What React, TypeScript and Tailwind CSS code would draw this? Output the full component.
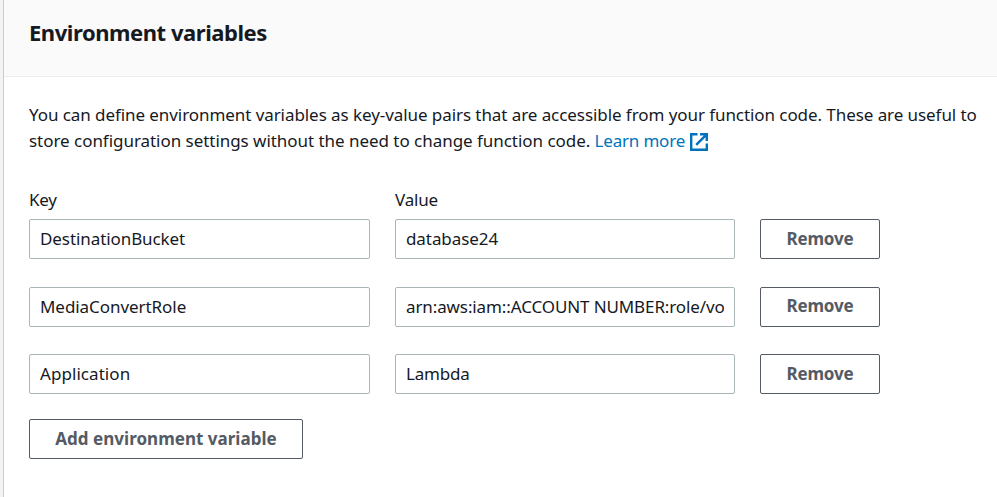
import type { ReactNode } from 'react';

type Variable = { name: string; value: string; keyTracking: string; valueTracking: string; gap: string; labelShift: string };

const variables: Variable[] = [
  { name: 'DestinationBucket', value: 'database24', keyTracking: 'tracking-[-0.08px]', valueTracking: 'tracking-[-0.08px]', gap: 'mb-7', labelShift: 'pb-0' },
  { name: 'MediaConvertRole', value: 'arn:aws:iam::ACCOUNT NUMBER:role/vo', keyTracking: 'tracking-[-0.06px]', valueTracking: 'tracking-[-0.11px]', gap: 'mb-[27px]', labelShift: 'pb-0.5' },
  { name: 'Application', value: 'Lambda', keyTracking: 'tracking-[0.06px]', valueTracking: 'tracking-[-0.2px]', gap: 'mb-[25px]', labelShift: 'pb-0' },
];

function Field({ children, tracking }: { children: ReactNode; tracking: string }) {
  return (
    <div className="h-10 rounded-[2px] border border-[#aab7b8] bg-white px-[10px]">
      <div className={`h-full overflow-hidden whitespace-nowrap leading-[38px] ${tracking}`}>{children}</div>
    </div>
  );
}

function Button({ children, className }: { children: ReactNode; className: string }) {
  return (
    <button
      type="button"
      className={`flex h-10 items-center justify-center whitespace-nowrap rounded-[2px] border border-[#545b64] bg-white font-bold text-[#545b64] ${className}`}
    >
      {children}
    </button>
  );
}

function ExternalIcon() {
  return (
    <svg className="ml-[5px] mt-[5px] h-[18px] w-[18px] shrink-0" viewBox="0 0 18 18" fill="none" stroke="#0073bb" strokeWidth="2.4">
      <path d="M7.5 1.2H1.2v15.6h15.6v-6.3M10 1.2h6.8v6.8M16.4 1.6 6.2 11.8" />
    </svg>
  );
}

export default function App() {
  return (
    <div className="flex h-[497px] w-[997px] overflow-hidden bg-[#f2f3f3] font-['Noto_Sans','Open_Sans',sans-serif] text-[17px] text-[#16191f]">
      <section className="ml-[3px] flex flex-1 flex-col border-l border-[#c8cdcd] bg-white">
        <header className="h-[77px] border-b border-[#eaeded] bg-[#fafafa] pl-[25px]">
          <h2 className="pt-[17px] text-[22px] font-bold leading-[30px] tracking-[-0.45px]">Environment variables</h2>
        </header>
        <div className="pl-[25px] pt-[25px]">
          <p className="h-[26px] whitespace-nowrap leading-[26px] tracking-[-0.07px]">
            You can define environment variables as key-value pairs that are accessible from your function code. These are useful to
          </p>
          <div className="flex h-[26px] whitespace-nowrap leading-[26px] tracking-[-0.04px]">
            <span>store configuration settings without the need to change function code.&nbsp;</span>
            <a className="flex tracking-[-0.2px] text-[#0073bb]">
              Learn more
              <ExternalIcon />
            </a>
          </div>
          <div className="mt-[33px] grid h-8 grid-cols-[341px_340px] gap-x-[25px] leading-[26px] tracking-[-0.2px]">
            <span>Key</span>
            <span>Value</span>
          </div>
          {variables.map((v) => (
            <div key={v.name} className={`grid grid-cols-[341px_340px_120px] gap-x-[25px] ${v.gap}`}>
              <Field tracking={v.keyTracking}>{v.name}</Field>
              <Field tracking={v.valueTracking}>{v.value}</Field>
              <Button className={`tracking-[-0.15px] ${v.labelShift}`}>Remove</Button>
            </div>
          ))}
          <Button className="w-[274px] tracking-[0.02px]">Add environment variable</Button>
        </div>
      </section>
    </div>
  );
}
